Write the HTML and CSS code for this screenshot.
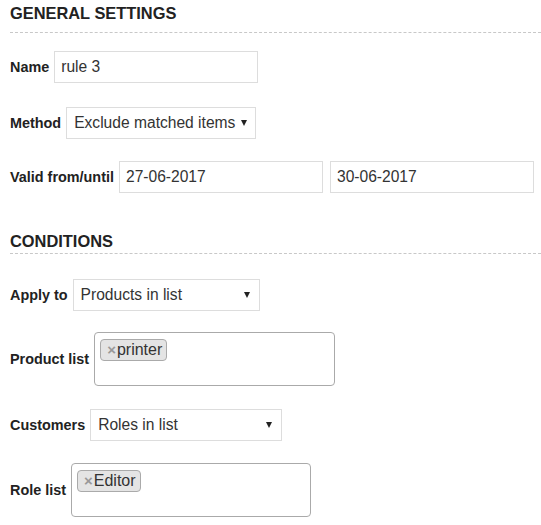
FILE: index.html
```html
<!DOCTYPE html>
<html>
<head>
<meta charset="utf-8">
<link rel="stylesheet" href="styles.css">
</head>
<body>
<div class="page">
  <h2 class="section-title">GENERAL SETTINGS</h2>

  <div class="row row-name">
    <label class="label">Name</label>
    <div class="input w-name">rule 3</div>
  </div>

  <div class="row row-method">
    <label class="label">Method</label>
    <div class="select w-method"><span>Exclude matched items</span><span class="caret"></span></div>
  </div>

  <div class="row row-valid">
    <label class="label">Valid from/until</label>
    <div class="input w-date">27-06-2017</div>
    <div class="input w-date">30-06-2017</div>
  </div>

  <h2 class="section-title second">CONDITIONS</h2>

  <div class="row row-apply">
    <label class="label">Apply to</label>
    <div class="select w-apply"><span>Products in list</span><span class="caret"></span></div>
  </div>

  <div class="row row-products">
    <label class="label">Product list</label>
    <div class="multi w-products"><span class="tag"><span class="x">×</span>printer</span></div>
  </div>

  <div class="row row-customers">
    <label class="label">Customers</label>
    <div class="select w-customers"><span>Roles in list</span><span class="caret"></span></div>
  </div>

  <div class="row row-roles">
    <label class="label">Role list</label>
    <div class="multi w-roles"><span class="tag"><span class="x">×</span>Editor</span></div>
  </div>
</div>
</body>
</html>
```

FILE: styles.css
```css
html, body {
  margin: 0;
  padding: 0;
  background: #ffffff;
}

body {
  font-family: "Liberation Sans", Arial, sans-serif;
  color: #222;
}

.page {
  padding-left: 10px;
}

.section-title {
  margin: 0;
  padding: 3px 0 9px;
  font-size: 16.4px;
  line-height: 20px;
  font-weight: bold;
  color: #222;
  border-bottom: 1px dashed #c8c8c8;
}

.section-title.second {
  margin-top: 35px;
  padding-bottom: 2px;
}

.row {
  display: flex;
  align-items: center;
  gap: 5px;
}

.row-name { margin-top: 18px; }
.row-method { margin-top: 24px; }
.row-valid { margin-top: 22px; }
.row-apply { margin-top: 25px; }
.row-products { margin-top: 21px; }
.row-customers { margin-top: 23px; }
.row-roles { margin-top: 22px; }

.label {
  font-size: 14.4px;
  font-weight: bold;
  color: #222;
  white-space: nowrap;
}

.input,
.select {
  box-sizing: border-box;
  height: 32px;
  border: 1px solid #dddddd;
  padding: 0 6px;
  font-size: 15.6px;
  line-height: 30px;
  color: #333;
  background: #fff;
  white-space: nowrap;
}

.select {
  display: flex;
  align-items: center;
  justify-content: space-between;
  padding-left: 7px;
  padding-right: 9px;
}

.caret {
  flex: none;
  width: 0;
  height: 0;
  border-left: 3.5px solid transparent;
  border-right: 3.5px solid transparent;
  border-top: 6px solid #222;
  margin-left: 6px;
}

.multi {
  box-sizing: border-box;
  height: 54px;
  border: 1px solid #aaaaaa;
  border-radius: 4px;
  padding: 6px 5px;
  background: #fff;
}

.tag {
  display: inline-block;
  background: #e4e4e4;
  border: 1px solid #aaaaaa;
  border-radius: 4px;
  padding: 0 4px 0 6px;
  font-size: 16px;
  line-height: 20px;
  color: #333;
}

.x {
  color: #999;
  font-size: 15px;
  font-weight: bold;
  margin-right: 1px;
}

.w-name { width: 204px; }
.w-method { width: 190px; }
.w-date { width: 204px; }
.w-date + .w-date { margin-left: 2px; }
.w-apply { width: 187px; }
.w-products { width: 241px; }
.w-customers { width: 192px; }
.w-roles { width: 240px; }
```
